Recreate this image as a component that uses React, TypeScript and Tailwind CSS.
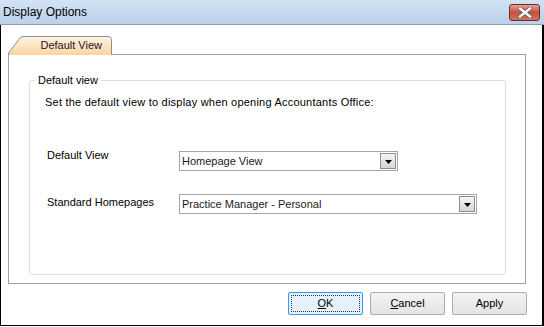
import React from "react";

function CloseButton() {
  return (
    <div className="mt-[4px] mr-[4px] flex h-[17px] w-[31px] items-center justify-center rounded-[3px] border border-[#6d2a22] bg-gradient-to-b from-[#e5a094] via-[#c5503f] to-[#d07262]">
      <svg width="14" height="11" viewBox="0 0 14 11">
        <path
          d="M2 1.5 L12 9.5 M12 1.5 L2 9.5"
          stroke="#5a5a5a"
          strokeWidth="4"
          strokeLinecap="square"
        />
        <path
          d="M2 1.5 L12 9.5 M12 1.5 L2 9.5"
          stroke="#ffffff"
          strokeWidth="2.4"
          strokeLinecap="square"
        />
      </svg>
    </div>
  );
}

function Combo({ width, value }: { width: string; value: string }) {
  return (
    <div className={`flex h-[20px] ${width} items-stretch border border-[#a5a5a5] bg-white`}>
      <span className="flex-1 pl-[2px] text-[11px] leading-[18px] text-[#1a1a1a]">{value}</span>
      <div className="m-[1px] flex w-[16px] items-center justify-center border border-[#8e8e8e] bg-gradient-to-b from-[#f6f6f6] to-[#d6d6d6]">
        <svg width="7" height="4" viewBox="0 0 7 4" className="mt-[2px]">
          <path d="M0 0 L7 0 L3.5 4 Z" fill="#000000" />
        </svg>
      </div>
    </div>
  );
}

function DialogButton({
  children,
  focused,
}: {
  children: React.ReactNode;
  focused?: boolean;
}) {
  if (focused) {
    return (
      <div className="flex h-[23px] w-[75px] items-center justify-center rounded-[2px] border border-[#3399ff] bg-[#e5f1fb] p-[2px]">
        <div className="flex h-full w-full items-center justify-center border border-dotted border-[#333333] text-[11px] text-black">
          {children}
        </div>
      </div>
    );
  }
  return (
    <div className="flex h-[23px] w-[75px] items-center justify-center rounded-[2px] border border-[#adadad] bg-gradient-to-b from-[#f3f3f3] to-[#e4e4e4] text-[11px] text-black">
      {children}
    </div>
  );
}

export default function App() {
  return (
    <div
      className="flex h-[327px] w-[544px] flex-col bg-white"
      style={{ fontFamily: '"Liberation Sans", Arial, sans-serif' }}
    >
      {/* Title bar */}
      <div className="flex h-[25px] items-start justify-between border-b border-[#8d9db2] bg-gradient-to-b from-[#d3e3f4] to-[#b9d1ea]">
        <span className="pl-[3px] pt-[5px] text-[12px] leading-[14px] text-black">Display Options</span>
        <CloseButton />
      </div>

      {/* Body */}
      <div className="flex flex-1 flex-col border-b border-l border-r-2 border-black">
        {/* Tab strip */}
        <div className="ml-[7px] mt-[11px] flex">
          <div className="relative z-10 flex h-[19px] w-[104px] items-center justify-end pr-[10px]">
            <svg className="absolute inset-0" width="104" height="19" viewBox="0 0 104 19">
              <defs>
                <linearGradient id="tabFill" x1="0" y1="0" x2="0" y2="1">
                  <stop offset="0" stopColor="#fdf3e6" />
                  <stop offset="1" stopColor="#fbd59f" />
                </linearGradient>
              </defs>
              <path
                d="M0.5 19 L0.5 17 L12 2 Q13.5 0.5 16 0.5 L100.5 0.5 Q103.5 0.5 103.5 3.5 L103.5 19"
                fill="url(#tabFill)"
                stroke="#8f8f8f"
              />
            </svg>
            <span className="relative text-[11px] leading-[13px] text-[#2a0f2a]">Default View</span>
          </div>
        </div>

        {/* Tab panel */}
        <div className="ml-[7px] mt-[-1px] h-[230px] w-[518px] border border-[#a0a0a0] bg-white">
          <fieldset className="ml-[20px] mt-[19px] h-[201px] w-[477px] rounded-[3px] border border-[#d5dfe5]">
            <legend className="ml-[5px] px-[3px] text-[11px] leading-[13px] text-black">Default view</legend>
            <p className="ml-[15px] mt-[9px] text-[11px] leading-[13px] tracking-[0.22px] text-black">
              Set the default view to display when opening Accountants Office:
            </p>

            <div className="ml-[17px] mt-[40px] flex items-start">
              <span className="w-[132px] text-[11px] leading-[13px] text-black">Default View</span>
              <div className="mt-[2px]">
                <Combo width="w-[219px]" value="Homepage View" />
              </div>
            </div>

            <div className="ml-[17px] mt-[23px] flex items-start">
              <span className="mt-[2px] w-[132px] text-[11px] leading-[13px] text-black">Standard Homepages</span>
              <Combo width="w-[298px]" value="Practice Manager - Personal" />
            </div>
          </fieldset>
        </div>

        {/* Buttons */}
        <div className="mr-[15px] mt-[8px] flex justify-end gap-[7px]">
          <DialogButton focused>
            <span>
              <span className="underline">O</span>K
            </span>
          </DialogButton>
          <DialogButton>
            <span>
              <span className="underline">C</span>ancel
            </span>
          </DialogButton>
          <DialogButton>Apply</DialogButton>
        </div>
      </div>
      <div className="h-[1px]" />
    </div>
  );
}
